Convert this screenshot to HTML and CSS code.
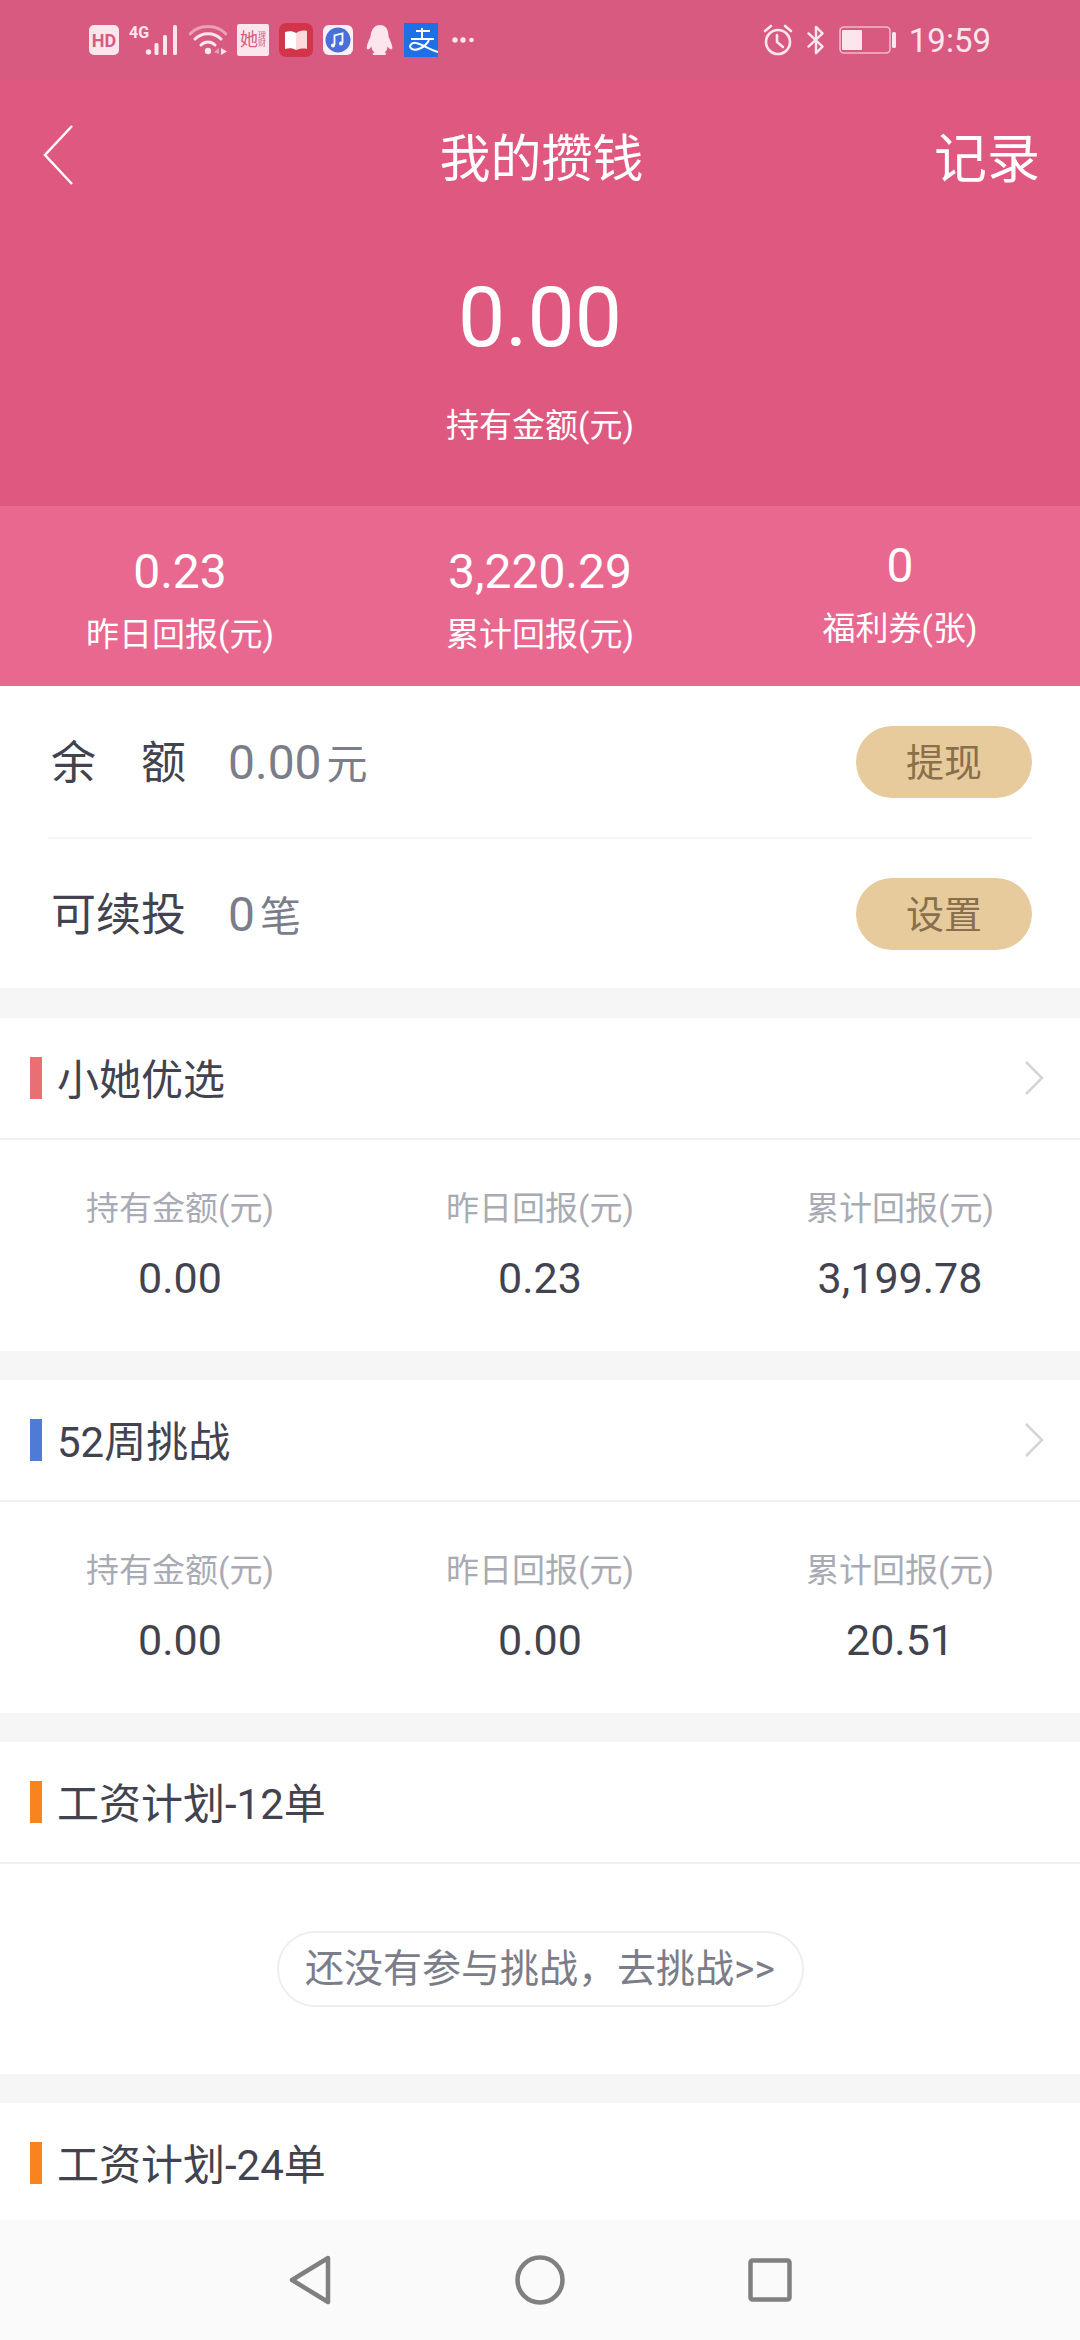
FILE: index.html
```html
<!DOCTYPE html>
<html lang="zh-CN">

<head>
    <meta charset="UTF-8" />
    <meta name="viewport" content="width=device-width, initial-scale=1.0" />
    <title>我的攒钱</title>
    <link rel="stylesheet" href="styles.css">
</head>

<body>
    <div class="phone">
        <!-- Status bar -->
        <div class="status-bar">
            <div class="status-left">
                <svg class="ic" width="30" height="30" viewBox="0 0 30 30"><rect width="30" height="30" rx="5" fill="#fbe6ee"/><text x="15" y="21.500" class="ic-hd">HD</text></svg>
                <svg class="ic" width="50" height="36" viewBox="0 -3 50 36"><text x="0" y="13" class="ic-4g">4G</text><g fill="#fbe6ee"><circle cx="19.500" cy="27" r="2.700"/><rect x="25.500" y="18" width="4" height="12" rx="1.500"/><rect x="34" y="10" width="4" height="20" rx="1.500"/><rect x="44" y="0" width="4" height="30" rx="1.500"/></g></svg>
                <svg class="ic" width="38" height="30" viewBox="0 0 38 30"><g fill="none" stroke-linecap="round"><path d="M1 9C10 -1 28 -1 37 9" stroke="#eba0b8" stroke-width="3"/><path d="M6 14C13 7 25 7 32 14" stroke="#fbe6ee" stroke-width="3"/><path d="M12 20C16 16 22 16 26 20" stroke="#fbe6ee" stroke-width="3"/></g><circle cx="19" cy="26" r="3.200" fill="#fbe6ee"/><path d="M25 27l5-4v6z" fill="#eba0b8"/><path d="M32 23l6 3.500-6 3.500z" fill="#fbe6ee"/></svg>
                <div class="ic-xiaota"><span class="xt-big">她</span><span class="xt-small">理财</span></div>
                <svg class="ic" width="34" height="34" viewBox="0 0 34 34"><rect width="34" height="34" rx="7" fill="#d23549"/><path d="M6 9c4-1 8-1 11 1v17c-3-2-7-2-11-1z" fill="#fff"/><path d="M17 10c3-2 7-3 11-2v18c-4-1-8 0-11 1z" fill="#fbd9dd"/></svg>
                <svg class="ic" width="30" height="30" viewBox="0 0 30 30"><rect width="30" height="30" rx="6" fill="#fbeef5"/><circle cx="15" cy="15" r="12.500" fill="#4a70d8"/><path d="M11.500 20V10.500l8-2V18" fill="none" stroke="#fff" stroke-width="1.800"/><circle cx="10" cy="20.500" r="2" fill="#fff"/><circle cx="18" cy="18.500" r="2" fill="#fff"/></svg>
                <svg class="ic ic-qq" width="28" height="32" viewBox="0 0 30 34"><path d="M15 1c6 0 9 5 9 11 0 3 3 6 4 12 1 3-1 4-3 2l-2-2c0 3-1 5-3 6 2 1 2 3 0 3H9c-3 0-2-2 0-3-2-1-3-3-3-6l-2 2c-2 2-4 1-3-2 1-6 4-9 4-12C6 6 9 1 15 1z" fill="#fbe6ee"/></svg>
                <svg class="ic" width="34" height="34" viewBox="0 0 34 34"><rect width="34" height="34" fill="#1f6fe8"/><path d="M12 8h14M18 5v11M7 16h23M25 17C21 25 12 28 8 26C4 24 7 19 12 20C18 21 26 27 34 29" fill="none" stroke="#fff" stroke-width="2"/></svg>
                <svg class="ic ic-dots" width="22" height="8" viewBox="0 0 22 8"><g fill="#fbe6ee"><circle cx="3" cy="4" r="2.700"/><circle cx="11" cy="4" r="2.700"/><circle cx="19.500" cy="4" r="2.300"/></g></svg>
            </div>
            <div class="status-right">
                <svg class="ic" width="30" height="32" viewBox="0 0 30 32"><g fill="none" stroke="#fbe6ee" stroke-width="2.600" stroke-linecap="round"><circle cx="15" cy="18" r="12"/><path d="M14 11v7l6 5M2 7l6-5M28 7l-6-5"/></g></svg>
                <svg class="ic" width="20" height="30" viewBox="0 0 20 32"><path d="M2 9l15 14-7 7V2l7 7L2 23" fill="none" stroke="#fbe6ee" stroke-width="2.600" stroke-linecap="round" stroke-linejoin="round"/></svg>
                <svg class="ic ic-batt" width="57" height="28" viewBox="0 0 57 28"><rect x="1" y="1" width="50" height="26" rx="4" fill="none" stroke="#f3b9cb" stroke-width="1.600"/><rect x="3" y="4" width="20" height="20" rx="1" fill="#fbe6ee"/><rect x="53" y="6" width="4" height="16" rx="1.500" fill="#fbe6ee"/></svg>
                <span class="clock">19:59</span>
            </div>
        </div>

        <!-- Hero -->
        <div class="hero">
            <div class="nav-row">
                <svg class="back" width="30" height="60" viewBox="0 0 30 60"><path d="M29 1L2 30l27 29" fill="none" stroke="#fff" stroke-width="2.500"/></svg>
                <h1>我的攒钱</h1>
                <span class="nav-link">记录</span>
            </div>
            <div class="hero-amount">0.00</div>
            <div class="hero-label">持有金额(元)</div>
        </div>

        <!-- Stats band -->
        <div class="stats-band">
            <div class="band-item">
                <div class="band-value">0.23</div>
                <div class="band-label">昨日回报(元)</div>
            </div>
            <div class="band-item">
                <div class="band-value">3,220.29</div>
                <div class="band-label">累计回报(元)</div>
            </div>
            <div class="band-item band-item-raised">
                <div class="band-value">0</div>
                <div class="band-label">福利券(张)</div>
            </div>
        </div>

        <!-- Balance rows -->
        <div class="balance">
            <div class="balance-row">
                <span class="balance-name">余　额</span>
                <span class="balance-value">0.00<small>元</small></span>
                <span class="pill-btn">提现</span>
            </div>
            <div class="balance-row">
                <span class="balance-name">可续投</span>
                <span class="balance-value">0<small>笔</small></span>
                <span class="pill-btn">设置</span>
            </div>
        </div>

        <!-- Products -->
        <div class="section">
            <div class="section-head">
                <i class="mark mark-red"></i>
                <span class="section-title">小她优选</span>
                <svg class="chevron" width="20" height="34" viewBox="0 0 20 34"><path d="M2 1l16 16L2 33" fill="none" stroke="#d3d4d8" stroke-width="2.500"/></svg>
            </div>
            <div class="section-body">
                <div class="cell"><div class="cell-label">持有金额(元)</div><div class="cell-value">0.00</div></div>
                <div class="cell"><div class="cell-label">昨日回报(元)</div><div class="cell-value">0.23</div></div>
                <div class="cell"><div class="cell-label">累计回报(元)</div><div class="cell-value">3,199.78</div></div>
            </div>
        </div>

        <div class="section">
            <div class="section-head">
                <i class="mark mark-blue"></i>
                <span class="section-title">52周挑战</span>
                <svg class="chevron" width="20" height="34" viewBox="0 0 20 34"><path d="M2 1l16 16L2 33" fill="none" stroke="#d3d4d8" stroke-width="2.500"/></svg>
            </div>
            <div class="section-body">
                <div class="cell"><div class="cell-label">持有金额(元)</div><div class="cell-value">0.00</div></div>
                <div class="cell"><div class="cell-label">昨日回报(元)</div><div class="cell-value">0.00</div></div>
                <div class="cell"><div class="cell-label">累计回报(元)</div><div class="cell-value">20.51</div></div>
            </div>
        </div>

        <div class="section">
            <div class="section-head">
                <i class="mark mark-orange"></i>
                <span class="section-title">工资计划-12单</span>
            </div>
            <div class="section-empty">
                <span class="challenge-pill">还没有参与挑战，去挑战&gt;&gt;</span>
            </div>
        </div>

        <div class="section section-last">
            <div class="section-head">
                <i class="mark mark-orange"></i>
                <span class="section-title">工资计划-24单</span>
            </div>
        </div>

        <!-- Android nav -->
        <div class="nav-bar">
            <svg width="42" height="50" viewBox="0 0 42 50"><path d="M39 3L3 25l36 22z" fill="none" stroke="#808080" stroke-width="4.500" stroke-linejoin="round"/></svg>
            <svg width="50" height="50" viewBox="0 0 50 50"><circle cx="25" cy="25" r="22.500" fill="none" stroke="#808080" stroke-width="4.500"/></svg>
            <svg width="44" height="44" viewBox="0 0 44 44"><rect x="2.500" y="2.500" width="39" height="39" rx="2" fill="none" stroke="#808080" stroke-width="4.500"/></svg>
        </div>
    </div>
</body>

</html>
```

FILE: styles.css
```css
* {
    margin: 0;
    padding: 0;
    box-sizing: border-box;
    font-family: "Roboto", "Noto Sans CJK SC", sans-serif;
}

body {
    background-color: #f6f6f6;
    color: #42434f;
    width: 1080px;
    height: 2340px;
    overflow: hidden;
}

.phone {
    display: flex;
    flex-direction: column;
    height: 2340px;
}

/* Status bar */

.status-bar {
    height: 80px;
    flex: none;
    background-color: #d85a80;
    display: flex;
    align-items: center;
    justify-content: space-between;
    padding: 0 89px 0 89px;
}

.status-left,
.status-right {
    display: flex;
    align-items: center;
}

.status-left {
    gap: 10px;
}

.status-right {
    gap: 13px;
}

.ic {
    display: block;
    flex: none;
}

.ic-qq {
    margin-left: 3px;
}

.ic-dots {
    margin-left: 4px;
}

.ic-hd {
    font-size: 18px;
    font-weight: 700;
    fill: #d85a80;
    text-anchor: middle;
}

.ic-4g {
    font-size: 16px;
    font-weight: 700;
    fill: #fbe6ee;
}

.ic-xiaota {
    width: 32px;
    height: 32px;
    flex: none;
    background-color: #fbe6ee;
    color: #d85a80;
    display: flex;
    align-items: center;
    justify-content: center;
    border-radius: 2px;
}

.xt-big {
    font-size: 18px;
    line-height: 1;
}

.xt-small {
    font-size: 8px;
    width: 8px;
    line-height: 1;
}

.clock {
    font-size: 33px;
    color: #fbe6ee;
    line-height: 1;
}

/* Hero */

.hero {
    height: 426px;
    flex: none;
    background-color: #df5880;
    color: #fff;
    text-align: center;
}

.nav-row {
    height: 150px;
    display: grid;
    grid-template-columns: 1fr auto 1fr;
    align-items: center;
    padding: 0 40px 0 43px;
}

.nav-row h1 {
    font-size: 51px;
    font-weight: 400;
    line-height: 150px;
    padding-top: 5px;
}

.nav-link {
    font-size: 53px;
    justify-self: end;
    padding-bottom: 5px;
}

.back {
    display: block;
    margin-bottom: 6px;
}

.hero-amount {
    font-size: 84px;
    line-height: 100px;
    margin-top: 38px;
}

.hero-label {
    font-size: 33px;
    line-height: 48px;
    margin-top: 34px;
}

/* Stats band */

.stats-band {
    height: 180px;
    flex: none;
    background-color: #e96890;
    color: #fff;
    display: grid;
    grid-template-columns: repeat(3, 1fr);
    text-align: center;
    padding-top: 38px;
}

.band-value {
    font-size: 48px;
    line-height: 56px;
}

.band-label {
    font-size: 33px;
    line-height: 46px;
    margin-top: 12px;
}

.band-item-raised {
    margin-top: -6px;
}

/* Balance rows */

.balance {
    background: white;
    height: 302px;
    padding: 0 48px;
    flex: none;
}

.balance-row {
    height: 151px;
    display: flex;
    align-items: center;
}

.balance-row + .balance-row {
    border-top: 2px solid #f5f5f6;
}

.balance-name {
    font-size: 45px;
    width: 180px;
    padding-left: 3px;
    padding-bottom: 4px;
}

.balance-value {
    font-size: 48px;
    color: #7b7d89;
    padding-bottom: 2px;
}

.balance-value small {
    font-size: 41px;
    margin-left: 5px;
}

.pill-btn {
    margin-left: auto;
    width: 176px;
    height: 72px;
    border-radius: 36px;
    background-color: #e7cb9c;
    color: #87704b;
    font-size: 38px;
    line-height: 74px;
    text-align: center;
}

/* Product sections */

.section {
    background: white;
    margin-top: 30px;
    flex: none;
}

.section + .section {
    margin-top: 29px;
}

.section-head {
    height: 122px;
    display: flex;
    align-items: center;
    padding: 0 36px 0 30px;
    border-bottom: 2px solid #f0f0f1;
}

.section-last {
    flex: 1;
    min-height: 0;
    overflow: hidden;
}

.mark {
    width: 12px;
    height: 42px;
    margin-right: 15px;
}

.mark-red {
    background-color: #ea6f74;
}

.mark-blue {
    background-color: #4f7ad6;
}

.mark-orange {
    background-color: #f8831f;
}

.section-title {
    font-size: 42px;
    padding-bottom: 4px;
}

.chevron {
    margin-left: auto;
}

.section-body {
    height: 211px;
    display: grid;
    grid-template-columns: repeat(3, 1fr);
    text-align: center;
    padding-top: 46px;
}

.cell-label {
    font-size: 33px;
    line-height: 46px;
    color: #a9abb4;
}

.cell-value {
    font-size: 43px;
    line-height: 56px;
    margin-top: 18px;
}

.section-empty {
    height: 210px;
    display: flex;
    justify-content: center;
    align-items: center;
}

.challenge-pill {
    width: 527px;
    height: 76px;
    border: 2px solid #eeeeef;
    border-radius: 38px;
    color: #7b7d89;
    font-size: 39px;
    line-height: 73px;
    text-align: center;
    white-space: nowrap;
}

/* Android nav */

.nav-bar {
    height: 120px;
    flex: none;
    background-color: #fafafa;
    display: grid;
    grid-template-columns: repeat(3, 1fr);
    padding: 0 195px;
    justify-items: center;
    align-items: center;
}
```
